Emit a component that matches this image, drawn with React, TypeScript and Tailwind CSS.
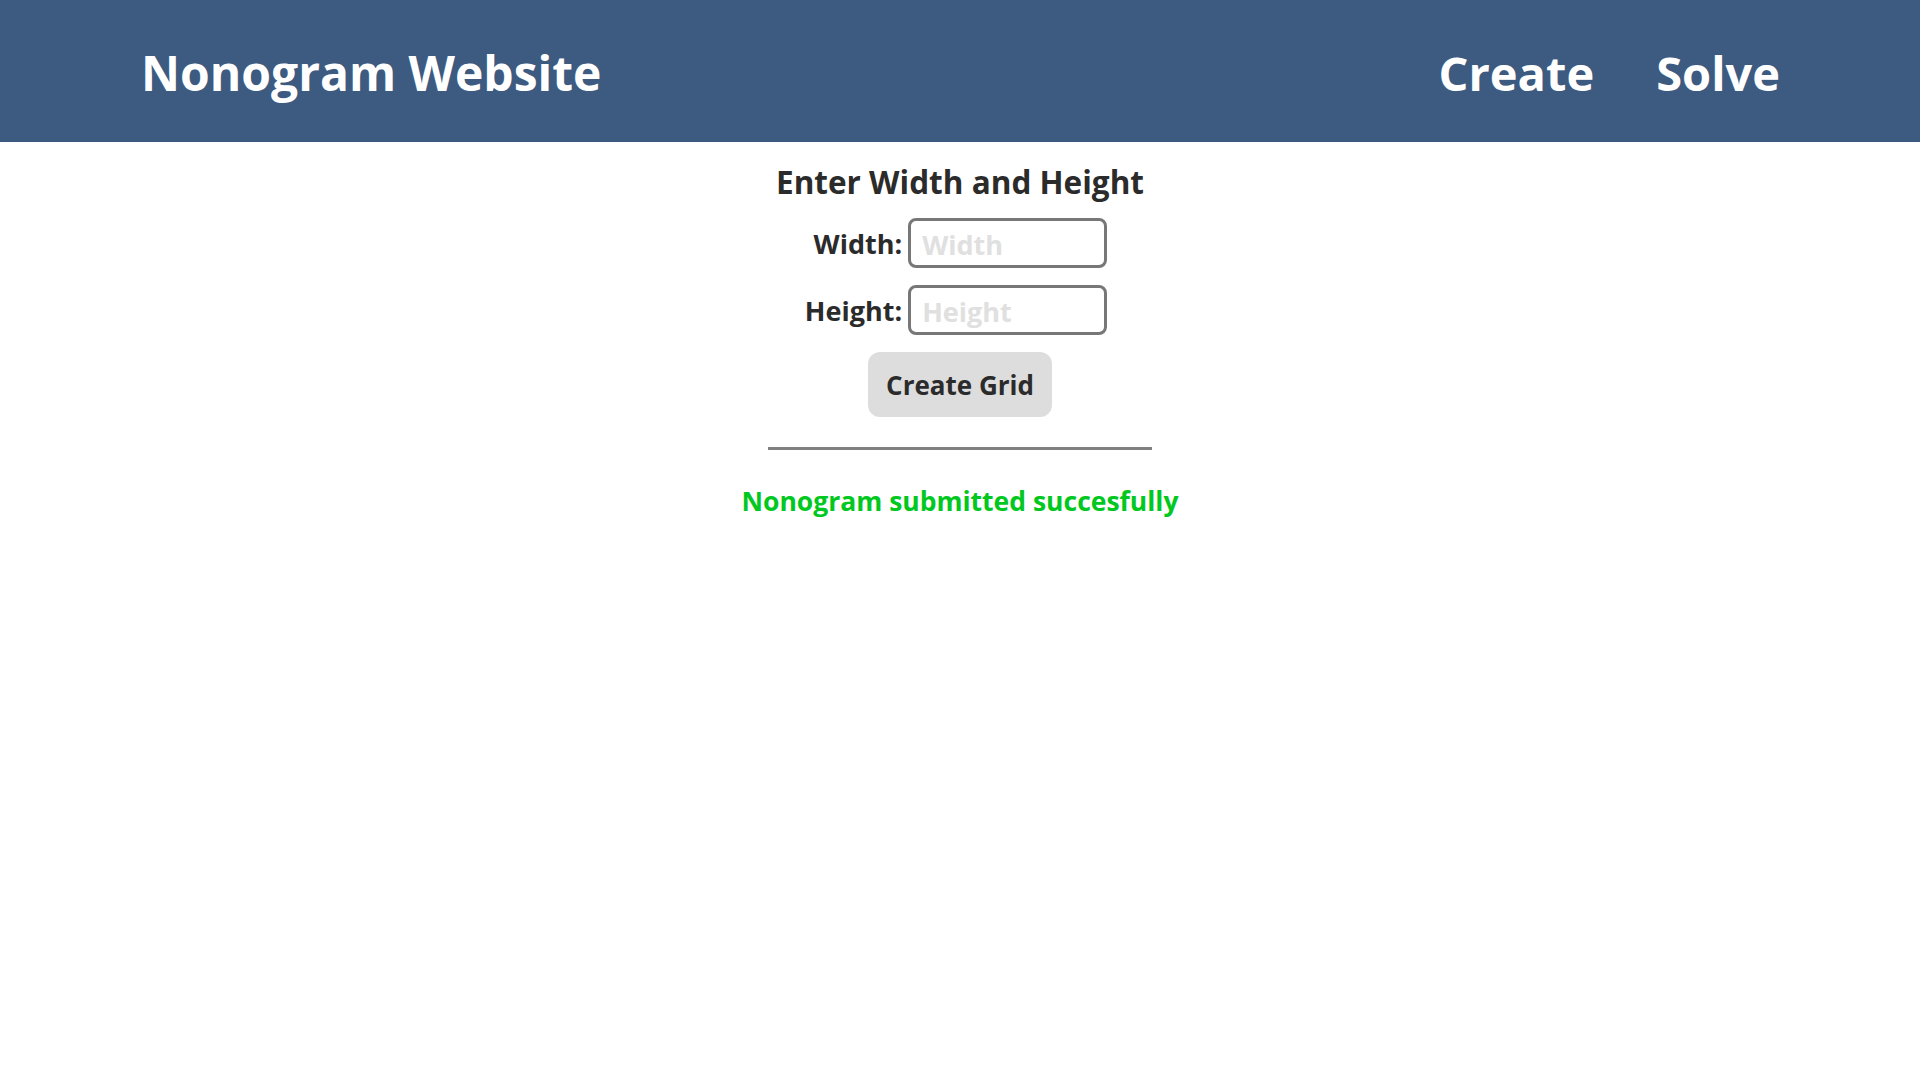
import React from "react";

const App = () => {
  return (
    <div className="min-h-screen bg-white font-['Open_Sans',sans-serif]">
      <header className="h-[142px] bg-[#3d5a80] flex items-center justify-between pl-[141px] pr-[140px] pt-1 text-white font-bold">
        <h1 className="text-[48px] leading-none">Nonogram Website</h1>
        <nav className="flex gap-[62px] text-[47px] leading-none">
          <a href="#">Create</a>
          <a href="#">Solve</a>
        </nav>
      </header>

      <main className="flex flex-col items-center text-[#2b2b2b] font-bold">
        <h2 className="mt-[24px] text-[31.5px] leading-none">Enter Width and Height</h2>

        <div className="mt-[20px] grid grid-cols-[auto_auto] items-center gap-x-[6px] gap-y-[17px] text-[27px] mr-[8px]">
          <label htmlFor="width" className="text-right pt-[4px]">Width:</label>
          <input
            id="width"
            type="number"
            placeholder="Width"
            className="w-[199px] h-[50px] border-[3px] border-[#777777] rounded-lg pl-[11px] pt-[4px] outline-none placeholder:text-[#e0e0e0]"
          />
          <label htmlFor="height" className="text-right pt-[4px]">Height:</label>
          <input
            id="height"
            type="number"
            placeholder="Height"
            className="w-[199px] h-[50px] border-[3px] border-[#777777] rounded-lg pl-[11px] pt-[4px] outline-none placeholder:text-[#e0e0e0]"
          />
        </div>

        <button className="mt-[17px] w-[184px] h-[65px] bg-[#dddddd] rounded-xl text-[26px] pt-[3px]">
          Create Grid
        </button>

        <hr className="mt-[30px] w-[384px] h-[3px] bg-[#808080] border-0" />

        <p className="mt-[38px] text-[26.5px] leading-none text-[#00c820]">Nonogram submitted succesfully</p>
      </main>
    </div>
  );
};

export default App;
